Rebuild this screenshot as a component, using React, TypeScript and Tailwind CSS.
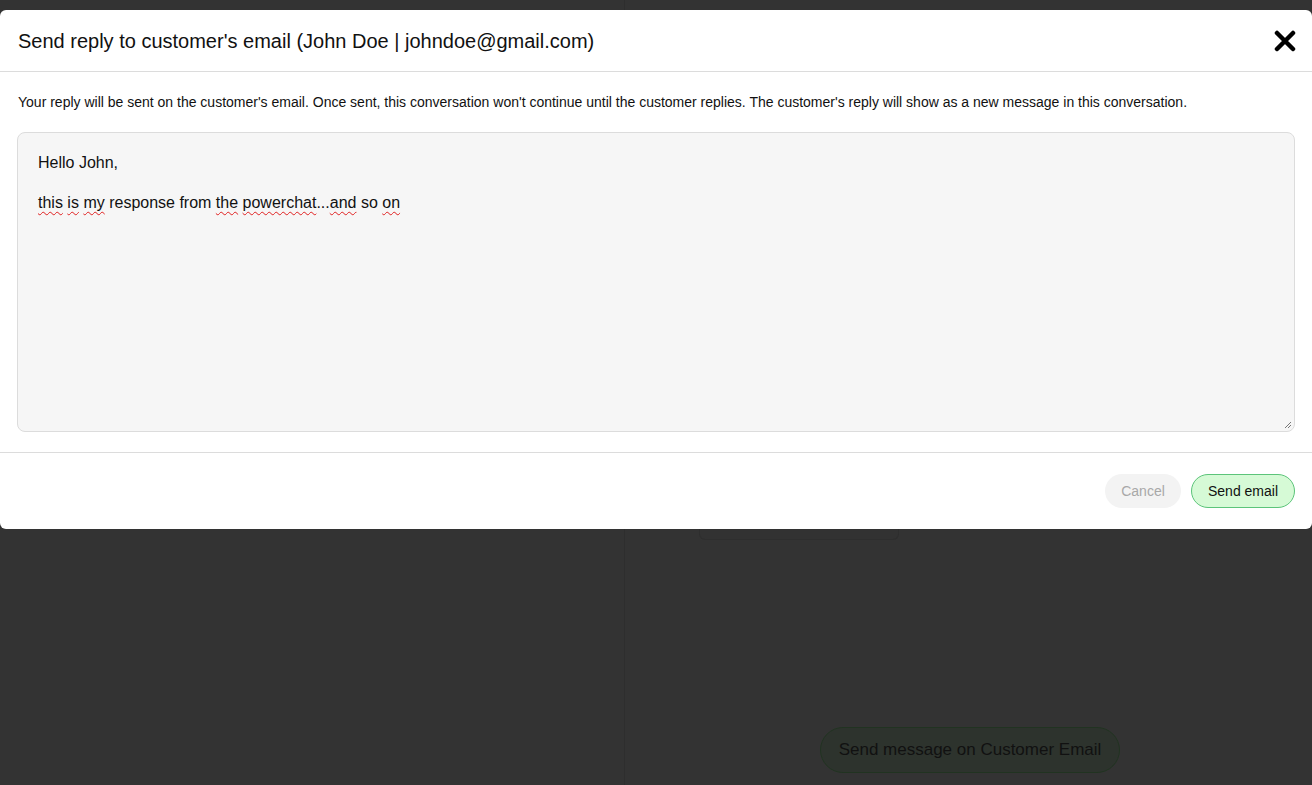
import React from "react";

const W = ({ children }: { children: React.ReactNode }) => (
  <span className="underline decoration-[#e02020] decoration-wavy decoration-[1px] underline-offset-[3px]">
    {children}
  </span>
);

export default function App() {
  return (
    <div
      className="relative flex h-[785px] w-full overflow-hidden bg-[#333333]"
      style={{ fontFamily: '"Liberation Sans", Arial, sans-serif' }}
    >
      {/* background page (under overlay) */}
      <div className="h-full w-[625px] border-r border-[#2e2e2e]" />
      <div className="flex h-full flex-1 flex-col">
        <div className="ml-[74px] mt-[510px] h-[30px] w-[200px] rounded-b-[6px] border border-t-0 border-[#2e2e2e] bg-[#323232]" />
        <div className="flex-1" />
        <div className="mb-[12px] ml-[195px] flex h-[46px] w-[300px] items-center justify-center rounded-full border border-[#213321] bg-[#2d332d] text-[17px] text-[#111]">
          Send message on Customer Email
        </div>
      </div>

      {/* modal */}
      <div className="absolute left-0 right-0 top-[10px] flex flex-col rounded-[6px] bg-white">
        <div className="flex h-[62px] items-center justify-between border-b border-[#dcdcdc] pl-[18px] pr-[16px]">
          <div className="text-[20px] text-[#111]">
            Send reply to customer's email (John Doe | johndoe@gmail.com)
          </div>
          <svg width="22" height="22" viewBox="0 0 22 22" className="mt-[1px]">
            <path
              d="M3 3 L19 19 M19 3 L3 19"
              stroke="#000"
              strokeWidth="4.5"
              strokeLinecap="round"
            />
          </svg>
        </div>
        <div className="flex flex-col px-[17px] pb-[20px] pt-[22px]">
          <div className="pl-[1px] text-[14px] leading-[16px] text-[#111]">
            Your reply will be sent on the customer's email. Once sent, this conversation won't continue until the customer replies. The customer's reply will show as a new message in this conversation.
          </div>
          <div className="relative mt-[22px] h-[300px] w-full rounded-[8px] border border-[#dcdcdc] bg-[#f6f6f6] px-[20px] pt-[20px] text-[16px] leading-[20px] text-[#111]">
            <div>Hello John,</div>
            <div className="h-[20px]" />
            <div>
              <W>this</W> <W>is</W> <W>my</W> response from <W>the</W> <W>powerchat</W>...<W>and</W> so <W>on</W>
            </div>
            <svg
              width="8"
              height="8"
              viewBox="0 0 8 8"
              className="absolute bottom-[2px] right-[2px]"
            >
              <path d="M7 1 L1 7 M7 4 L4 7" stroke="#777" strokeWidth="1" />
            </svg>
          </div>
        </div>
        <div className="flex items-center justify-end gap-[10px] border-t border-[#dcdcdc] px-[17px] py-[21px]">
          <button className="h-[34px] w-[76px] rounded-full bg-[#f3f3f3] text-[14px] text-[#a8a8a8]">
            Cancel
          </button>
          <button className="h-[34px] w-[104px] rounded-full border border-[#5cc47a] bg-[#d6fad6] text-[14px] text-[#111]">
            Send email
          </button>
        </div>
      </div>
    </div>
  );
}
